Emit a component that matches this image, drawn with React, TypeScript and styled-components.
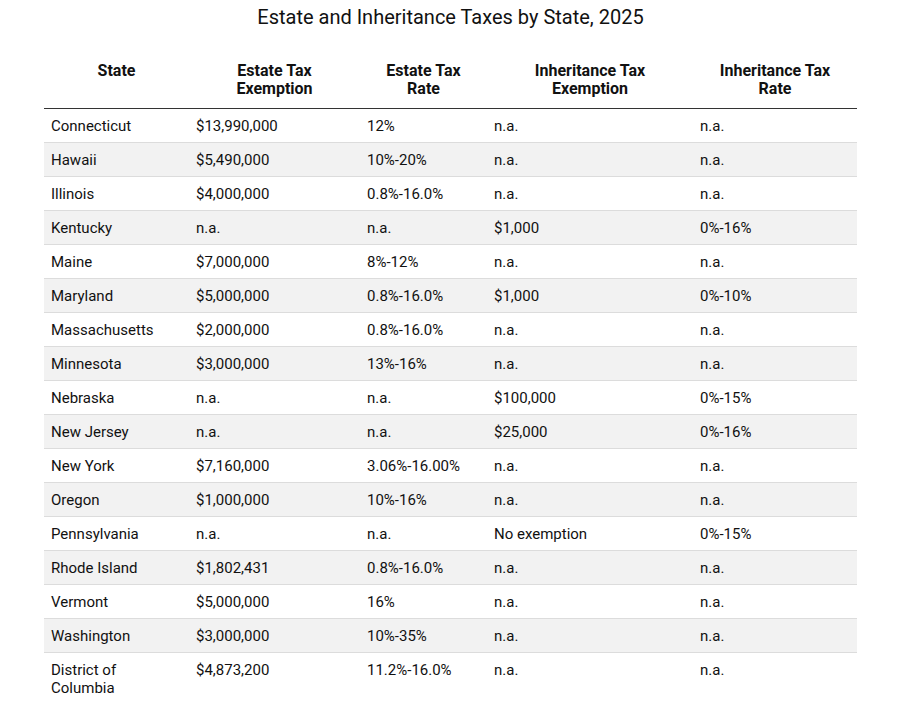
import styled, { createGlobalStyle } from 'styled-components'

const rows: string[][] = [
  ['Connecticut', '$13,990,000', '12%', 'n.a.', 'n.a.'],
  ['Hawaii', '$5,490,000', '10%-20%', 'n.a.', 'n.a.'],
  ['Illinois', '$4,000,000', '0.8%-16.0%', 'n.a.', 'n.a.'],
  ['Kentucky', 'n.a.', 'n.a.', '$1,000', '0%-16%'],
  ['Maine', '$7,000,000', '8%-12%', 'n.a.', 'n.a.'],
  ['Maryland', '$5,000,000', '0.8%-16.0%', '$1,000', '0%-10%'],
  ['Massachusetts', '$2,000,000', '0.8%-16.0%', 'n.a.', 'n.a.'],
  ['Minnesota', '$3,000,000', '13%-16%', 'n.a.', 'n.a.'],
  ['Nebraska', 'n.a.', 'n.a.', '$100,000', '0%-15%'],
  ['New Jersey', 'n.a.', 'n.a.', '$25,000', '0%-16%'],
  ['New York', '$7,160,000', '3.06%-16.00%', 'n.a.', 'n.a.'],
  ['Oregon', '$1,000,000', '10%-16%', 'n.a.', 'n.a.'],
  ['Pennsylvania', 'n.a.', 'n.a.', 'No exemption', '0%-15%'],
  ['Rhode Island', '$1,802,431', '0.8%-16.0%', 'n.a.', 'n.a.'],
  ['Vermont', '$5,000,000', '16%', 'n.a.', 'n.a.'],
  ['Washington', '$3,000,000', '10%-35%', 'n.a.', 'n.a.'],
  ['District of Columbia', '$4,873,200', '11.2%-16.0%', 'n.a.', 'n.a.'],
]

const headers = [
  ['State'],
  ['Estate Tax', 'Exemption'],
  ['Estate Tax', 'Rate'],
  ['Inheritance Tax', 'Exemption'],
  ['Inheritance Tax', 'Rate'],
]

const widths = [145, 171, 127, 206, 164]

export default function App() {
  return (
    <>
      <GlobalStyle />
      <Page>
        <Title>Estate and Inheritance Taxes by State, 2025</Title>
        <Table>
          <colgroup>
            {widths.map((w, i) => <col key={i} style={{width: w}} />)}
          </colgroup>
          <thead>
            <tr>
              {headers.map((h, i) => (
                <Th key={i}>
                  {h.map((line, j) => <div key={j}>{line}</div>)}
                </Th>
              ))}
            </tr>
          </thead>
          <tbody>
            {rows.map((r, i) => (
              <Row key={r[0]} $striped={i % 2 === 1}>
                {r.map((c, j) => (
                  <Td key={j} $narrow={j === 0 && i === rows.length - 1}>{c}</Td>
                ))}
              </Row>
            ))}
          </tbody>
        </Table>
      </Page>
    </>
  )
}

const GlobalStyle = createGlobalStyle`
  body{
    margin: 0;
    background: #fff;
    font-family: Roboto, "Liberation Sans", Arial, sans-serif;
    color: #111;
  }
`
const Page = styled.div`
  width: 898px;
  padding: 5px 0 0 44px;
  box-sizing: border-box;
`
const Title = styled.h1`
  margin: 0 0 33px 0;
  width: 813px;
  text-align: center;
  font-size: 20px;
  font-weight: 400;
  line-height: 24px;
  color: #111;
`
const Table = styled.table`
  width: 813px;
  border-collapse: collapse;
  table-layout: fixed;
  font-size: 15px;
`
const Th = styled.th`
  font-weight: 700;
  font-size: 16px;
  line-height: 18px;
  text-align: center;
  vertical-align: top;
  padding: 0 7px 10px 7px;
  border-bottom: 1px solid #333;
  color: #111;
`
const Row = styled.tr<{$striped: boolean}>`
  background: ${p => p.$striped ? '#f2f2f2' : '#fff'};
  border-bottom: 1px solid #dcdcdc;
  &:last-child{
    border-bottom: none;
  }
`
const Td = styled.td<{$narrow: boolean}>`
  padding: 8px 7px 7px 7px;
  line-height: 18px;
  vertical-align: top;
  color: #111;
  ${p => p.$narrow && 'padding-right: 40px;'}
`
